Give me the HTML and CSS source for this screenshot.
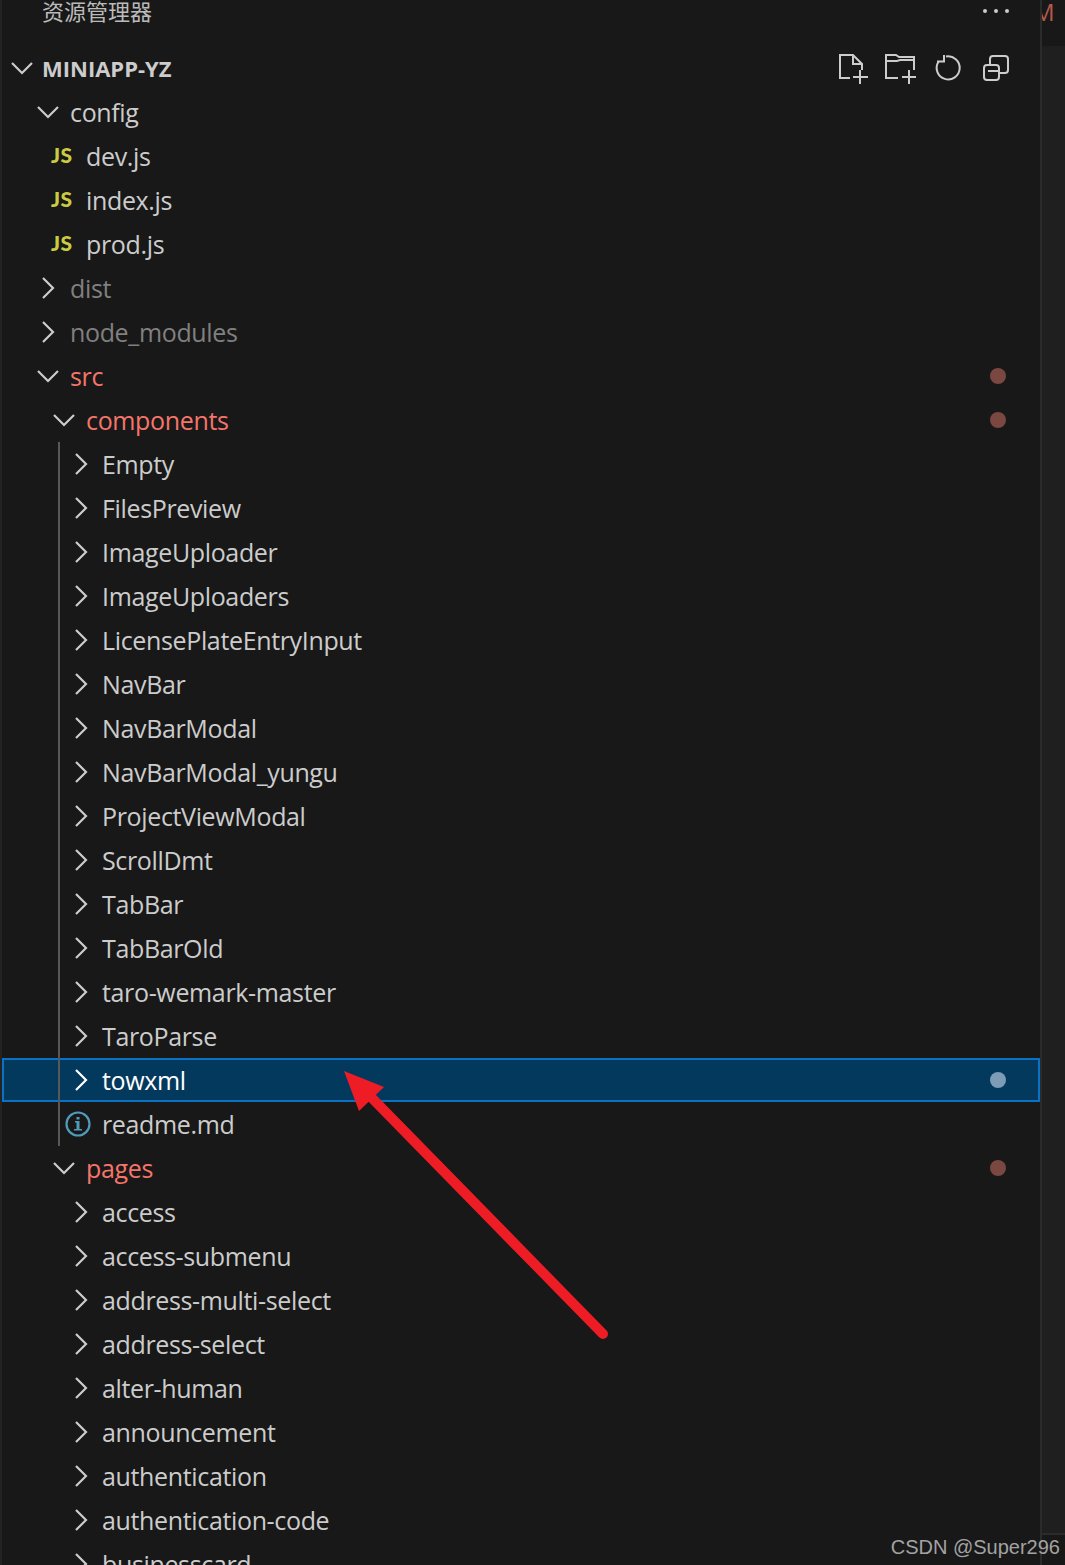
FILE: index.html
```html
<!DOCTYPE html>
<html lang="zh-CN">
<head>
<meta charset="utf-8">
<title>资源管理器</title>
<link rel="stylesheet" href="styles.css">
</head>
<body>
<svg class="sprite" aria-hidden="true">
  <symbol id="down" viewBox="0 0 32 32"><path d="M6 11l10 10 10-10"/></symbol>
  <symbol id="right" viewBox="0 0 32 32"><path d="M11 6l10 10-10 10"/></symbol>
</svg>
<div class="app">
  <aside class="sidebar">
    <header class="title-bar">
      <span class="title">资源管理器</span>
      <svg class="more" viewBox="0 0 28 6"><circle cx="3" cy="3" r="2"/><circle cx="14" cy="3" r="2"/><circle cx="25" cy="3" r="2"/></svg>
    </header>
    <div class="root-row">
      <svg class="tw"><use href="#down"/></svg>
      <span class="root-name">MINIAPP-YZ</span>
      <div class="actions">
        <svg class="act" viewBox="0 0 32 32"><path d="M14 26H4V3h13l9 9v6M17 3v9h9M24 18v14M17 25h15"/></svg>
        <svg class="act" viewBox="0 0 32 32"><path d="M14 26H2V3h10l3 2h15v13M2 9h11l3-1h14M25 18v14M18 25h14"/></svg>
        <svg class="act" viewBox="0 0 32 32"><path d="M14 4.600A11.500 11.500 0 1 1 6.300 10M12 3v6.500H5"/></svg>
        <svg class="act" viewBox="0 0 32 32"><path d="M10 13V7a3 3 0 0 1 3-3h12a3 3 0 0 1 3 3v11a3 3 0 0 1-3 3h-6M7 13h9a3 3 0 0 1 3 3v9a3 3 0 0 1-3 3H7a3 3 0 0 1-3-3v-9a3 3 0 0 1 3-3zM8 19h10"/></svg>
      </div>
    </div>
    <div class="tree">
      <div class="row l1"><svg class="tw"><use href="#down"/></svg><span>config</span></div>
      <div class="row f1"><span class="js">JS</span><span>dev.js</span></div>
      <div class="row f1"><span class="js">JS</span><span>index.js</span></div>
      <div class="row f1"><span class="js">JS</span><span>prod.js</span></div>
      <div class="row l1 dim"><svg class="tw"><use href="#right"/></svg><span>dist</span></div>
      <div class="row l1 dim"><svg class="tw"><use href="#right"/></svg><span>node_modules</span></div>
      <div class="row l1 mod"><svg class="tw"><use href="#down"/></svg><span>src</span><i class="dot"></i></div>
      <div class="row l2 mod"><svg class="tw"><use href="#down"/></svg><span>components</span><i class="dot"></i></div>
      <div class="guided">
        <div class="row l3"><svg class="tw"><use href="#right"/></svg><span>Empty</span></div>
        <div class="row l3"><svg class="tw"><use href="#right"/></svg><span>FilesPreview</span></div>
        <div class="row l3"><svg class="tw"><use href="#right"/></svg><span>ImageUploader</span></div>
        <div class="row l3"><svg class="tw"><use href="#right"/></svg><span>ImageUploaders</span></div>
        <div class="row l3"><svg class="tw"><use href="#right"/></svg><span>LicensePlateEntryInput</span></div>
        <div class="row l3"><svg class="tw"><use href="#right"/></svg><span>NavBar</span></div>
        <div class="row l3"><svg class="tw"><use href="#right"/></svg><span>NavBarModal</span></div>
        <div class="row l3"><svg class="tw"><use href="#right"/></svg><span>NavBarModal_yungu</span></div>
        <div class="row l3"><svg class="tw"><use href="#right"/></svg><span>ProjectViewModal</span></div>
        <div class="row l3"><svg class="tw"><use href="#right"/></svg><span>ScrollDmt</span></div>
        <div class="row l3"><svg class="tw"><use href="#right"/></svg><span>TabBar</span></div>
        <div class="row l3"><svg class="tw"><use href="#right"/></svg><span>TabBarOld</span></div>
        <div class="row l3"><svg class="tw"><use href="#right"/></svg><span>taro-wemark-master</span></div>
        <div class="row l3"><svg class="tw"><use href="#right"/></svg><span>TaroParse</span></div>
        <div class="row l3 selected"><svg class="tw"><use href="#right"/></svg><span>towxml</span><i class="dot"></i></div>
        <div class="row i3">
          <svg class="info" viewBox="0 0 26 26"><circle cx="13" cy="13" r="11.500"/><path class="info-i" d="M10 10h4.500v8H17v1.500H9V18h2.500v-6.500H10zM11.500 6h3v2.500h-3z"/></svg>
          <span>readme.md</span>
        </div>
      </div>
      <div class="row l2 mod"><svg class="tw"><use href="#down"/></svg><span>pages</span><i class="dot"></i></div>
      <div class="row l3"><svg class="tw"><use href="#right"/></svg><span>access</span></div>
      <div class="row l3"><svg class="tw"><use href="#right"/></svg><span>access-submenu</span></div>
      <div class="row l3"><svg class="tw"><use href="#right"/></svg><span>address-multi-select</span></div>
      <div class="row l3"><svg class="tw"><use href="#right"/></svg><span>address-select</span></div>
      <div class="row l3"><svg class="tw"><use href="#right"/></svg><span>alter-human</span></div>
      <div class="row l3"><svg class="tw"><use href="#right"/></svg><span>announcement</span></div>
      <div class="row l3"><svg class="tw"><use href="#right"/></svg><span>authentication</span></div>
      <div class="row l3"><svg class="tw"><use href="#right"/></svg><span>authentication-code</span></div>
      <div class="row l3"><svg class="tw"><use href="#right"/></svg><span>businesscard</span></div>
    </div>
  </aside>
  <div class="side-panel">
    <div class="tab-strip"><span class="tab-letter">M</span></div>
    <div class="minimap"></div>
    <div class="minimap-foot"></div>
  </div>
</div>
<svg class="arrow" viewBox="0 0 1065 1565" aria-hidden="true">
  <path class="arrow-shaft" d="M603 1334L368 1094"/>
  <path class="arrow-head" d="M344 1071L384 1087L359 1111Z"/>
</svg>
<div class="watermark">CSDN @Super296</div>
</body>
</html>
```
FILE: styles.css
```css
* { box-sizing: border-box; }
html, body { margin: 0; height: 100%; }
body {
  position: relative;
  width: 1065px;
  height: 1565px;
  overflow: hidden;
  background: #181818;
  color: #cccccc;
  font-family: "Open Sans", "Noto Sans CJK SC", sans-serif;
  font-size: 25px;
  letter-spacing: -0.35px;
}
.sprite { display: none; }
.app { display: flex; height: 1565px; padding-left: 2px; background: #232323; }
.sidebar { width: 1038px; flex: none; background: #181818; overflow: hidden; }

.title-bar { display: flex; align-items: center; justify-content: space-between; height: 46px; padding: 0 30px 24px 40px; }
.title { position: relative; top: -1px; font-family: "Noto Sans CJK SC", sans-serif; font-size: 22px; line-height: 24px; letter-spacing: 0; color: #bbbbbb; }
.more { width: 28px; height: 6px; fill: #cccccc; }

.root-row { display: flex; align-items: center; height: 44px; padding-left: 4px; padding-right: 28px; }
.root-name { margin-left: 4px; font-size: 22px; font-weight: 700; letter-spacing: 0; }
.actions { display: flex; gap: 16px; margin-left: auto; }
.act { width: 32px; height: 32px; fill: none; stroke: #cccccc; stroke-width: 2; }

.tw { width: 32px; height: 32px; flex: none; fill: none; stroke: #cccccc; stroke-width: 2.200; }
.row { display: flex; align-items: center; height: 44px; padding-right: 34px; white-space: nowrap; }
.row .tw { margin-right: 6px; }
.l1 { padding-left: 30px; }
.l2 { padding-left: 46px; }
.l3 { padding-left: 63px; }
.l3 .tw { margin-right: 5px; }
.f1 { padding-left: 49px; }
.i3 { padding-left: 63px; }

.js { width: 35px; flex: none; font-family: "Lato", sans-serif; font-size: 21px; font-weight: 900; color: #cbcb41; letter-spacing: 0.5px; line-height: 24px; margin-top: -2px; }
.info { width: 26px; height: 26px; margin-right: 11px; flex: none; fill: none; stroke: #519aba; stroke-width: 2.200; }
.info-i { fill: #519aba; stroke: none; }

.dim { color: #808080; }
.mod { color: #f5756a; }
.dot { width: 16px; height: 16px; margin-left: auto; border-radius: 50%; background: #7a4741; }
.selected { background: #04395e; color: #ffffff; box-shadow: inset 0 0 0 2px #0a72c4; }
.selected .tw { stroke: #ffffff; }
.selected .dot { background: #7c9db5; }

.guided { position: relative; }
.guided::before { content: ""; position: absolute; left: 56px; top: 0; bottom: 0; width: 2px; background: #585858; z-index: 1; }

.side-panel { flex: 1; display: flex; flex-direction: column; border-left: 2px solid #2b2b2b; }
.tab-strip { height: 46px; background: #181818; overflow: hidden; }
.tab-letter { display: block; margin: -4px 0 0 -9px; font-size: 24px; line-height: 32px; color: #b5584c; }
.minimap { flex: 1; background: #1f1f1f; }
.minimap-foot { height: 32px; border-top: 2px solid #2b2b2b; background: #181818; }

.arrow { position: absolute; left: 0; top: 0; width: 1065px; height: 1565px; pointer-events: none; }
.arrow-shaft { fill: none; stroke: #ee1c25; stroke-width: 10; stroke-linecap: round; }
.arrow-head { fill: #ee1c25; }
.watermark { position: absolute; right: 5px; bottom: 5px; font-family: "Liberation Sans", sans-serif; font-size: 20px; line-height: 26px; letter-spacing: 0; color: #a3a3a3; }
```
